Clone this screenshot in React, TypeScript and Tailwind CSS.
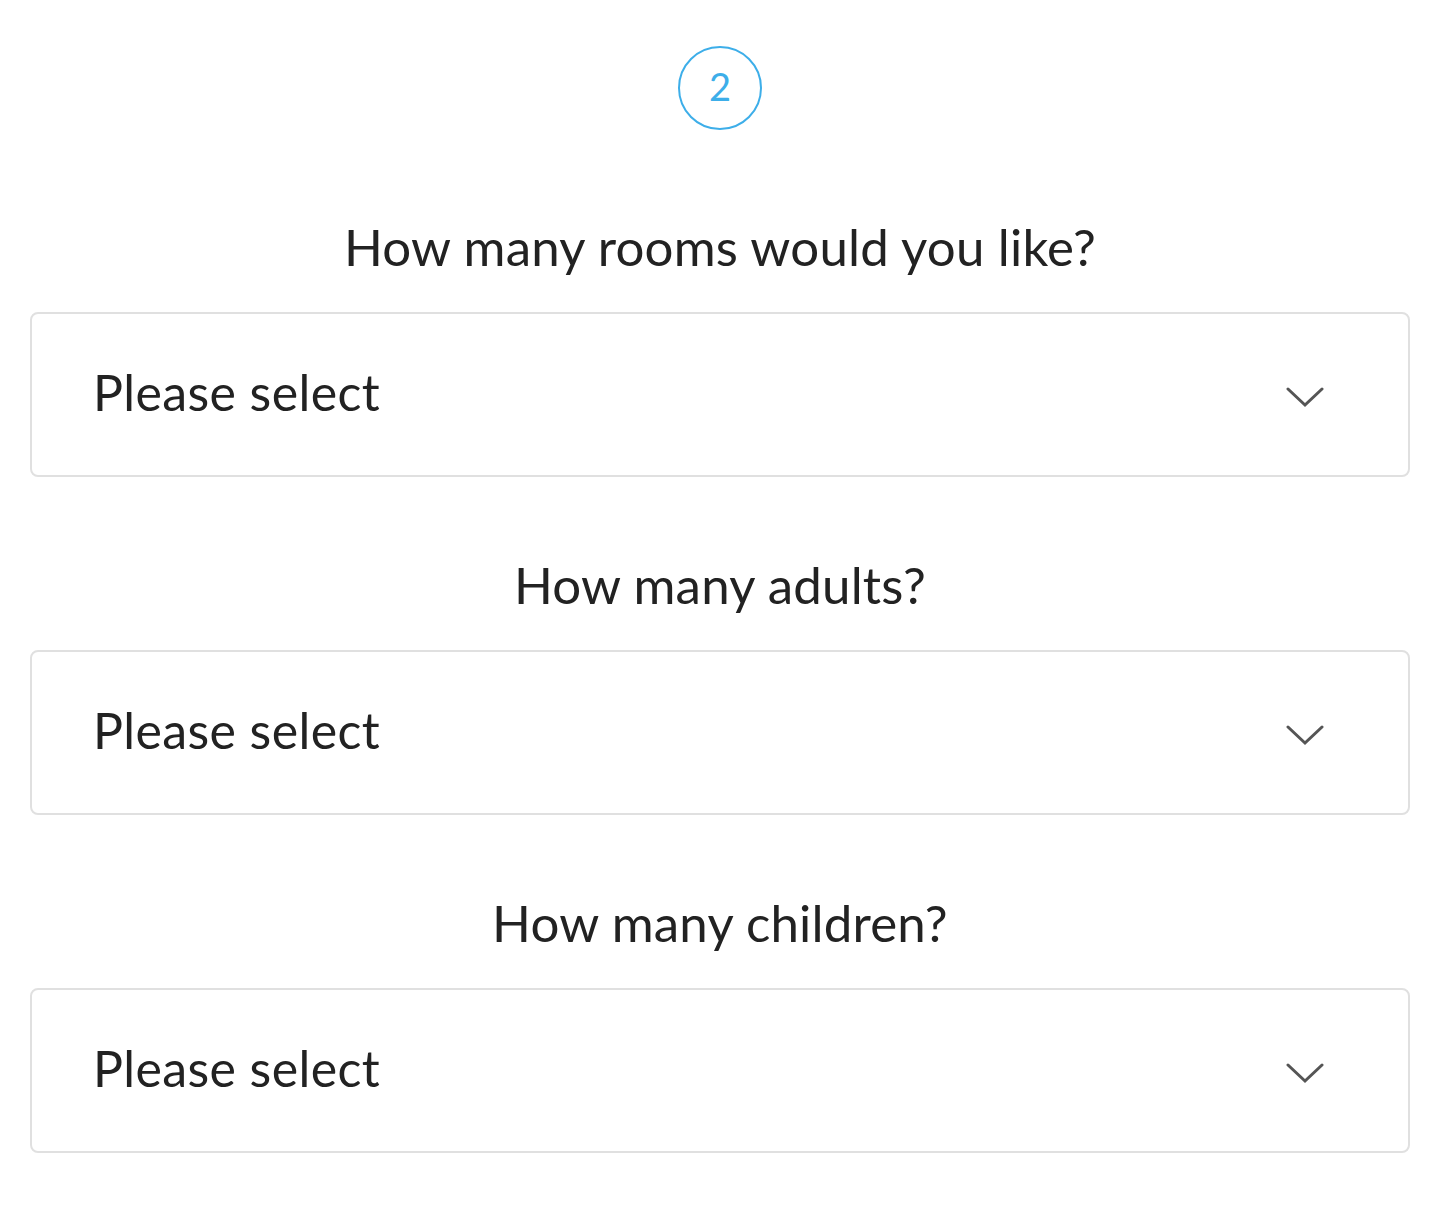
import React from "react";

function Chevron() {
  return (
    <svg width="38" height="22" viewBox="0 0 38 22" fill="none" className="shrink-0 mt-[4px]">
      <path d="M2 3 L19 19 L36 3" stroke="#555555" strokeWidth="3" strokeLinecap="round" strokeLinejoin="miter" />
    </svg>
  );
}

function Field({ label }: { label: string }) {
  return (
    <div className="flex flex-col items-center">
      <div className="h-[76px] flex items-center text-[51px] leading-none text-[#222] tracking-[0.2px]">{label}</div>
      <div className="mt-[28px] w-full h-[165px] border-2 border-[#e0e0e0] rounded-[8px] bg-white flex items-center justify-between pl-[61px] pr-[84px]">
        <span className="text-[50px] leading-none text-[#222] tracking-[0.4px] pb-[6px]">Please select</span>
        <Chevron />
      </div>
    </div>
  );
}

export default function App() {
  return (
    <div className="w-[1440px] h-[1216px] bg-white px-[30px] pt-[46px]" style={{ fontFamily: "Lato, 'Noto Sans', sans-serif" }}>
      <div className="flex justify-center">
        <div className="w-[84px] h-[84px] rounded-full border-2 border-[#3daee9] flex items-center justify-center text-[38px] text-[#3daee9] leading-none pb-[4px]">
          2
        </div>
      </div>
      <div className="mt-[78px] flex flex-col gap-[69px]">
        <Field label="How many rooms would you like?" />
        <Field label="How many adults?" />
        <Field label="How many children?" />
      </div>
    </div>
  );
}
